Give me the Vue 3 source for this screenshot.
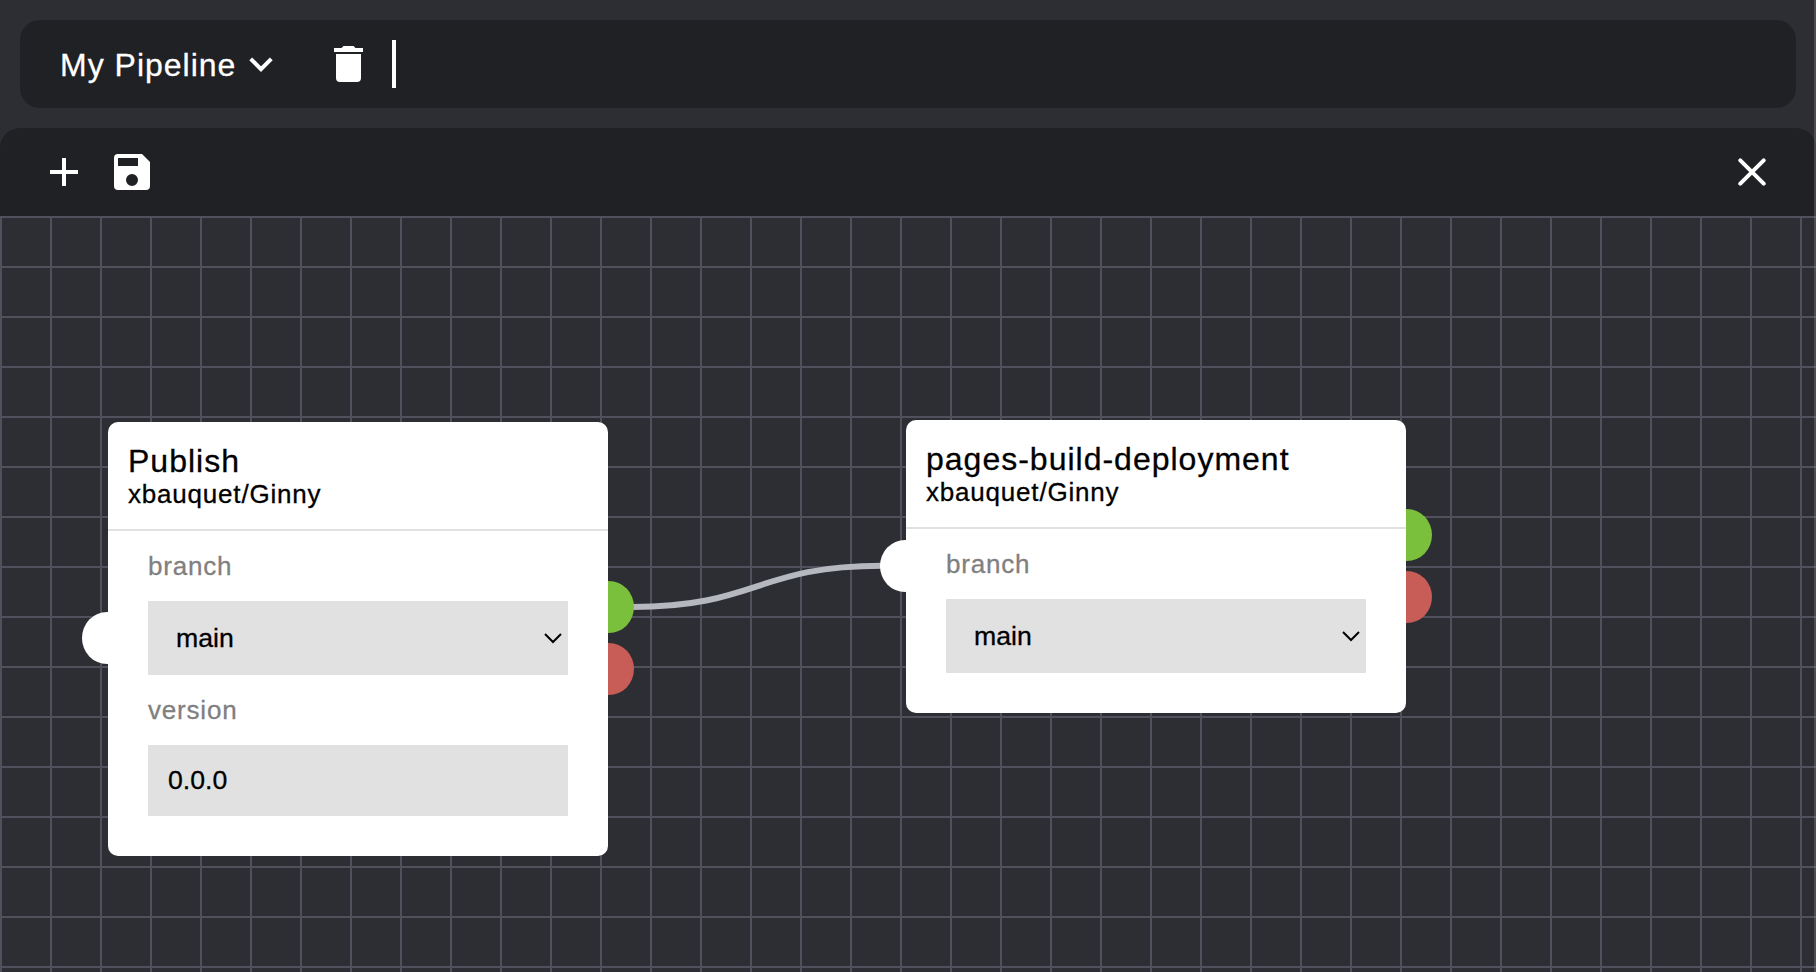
<script setup>
const nodes = [
  {
    id: 'publish', title: 'Publish', repo: 'xbauquet/Ginny',
    fields: [
      { label: 'branch', type: 'select', value: 'main' },
      { label: 'version', type: 'text', value: '0.0.0' },
    ],
  },
  {
    id: 'pages', title: 'pages-build-deployment', repo: 'xbauquet/Ginny',
    fields: [{ label: 'branch', type: 'select', value: 'main' }],
  },
]
</script>

<template>
  <div class="app">
    <header class="topbar">
      <button class="pipeline">
        <span class="name">My Pipeline</span>
        <svg class="chevron" width="24" height="16" viewBox="0 0 24 16"><path d="M1.7 2.9 12 13.1 22.3 2.9" fill="none" stroke="#fff" stroke-width="4" /></svg>
      </button>
      <svg class="trash" width="30" height="36" viewBox="0 0 30 36"><path fill="#fff" d="M0 2h7.5l2-2h10l2 2H29v4H0zM2 8h25v24a4 4 0 0 1-4 4H6a4 4 0 0 1-4-4z" /></svg>
      <span class="divider"></span>
    </header>

    <section class="toolbar">
      <svg width="28" height="28" viewBox="0 0 28 28"><path d="M14 0v28M0 14h28" stroke="#fff" stroke-width="4" /></svg>
      <svg class="save" width="36" height="36" viewBox="0 0 36 36"><path fill="#fff" fill-rule="evenodd" d="M4 0h24l8 8v24a4 4 0 0 1-4 4H4a4 4 0 0 1-4-4V4a4 4 0 0 1 4-4zm0 4v8h20V4zm14 16a6 6 0 1 0 0 12 6 6 0 0 0 0-12z" /></svg>
      <svg class="close" width="28" height="28" viewBox="0 0 28 28"><path d="M2.3 2.3 25.7 25.7M25.7 2.3 2.3 25.7" stroke="#fff" stroke-width="4" stroke-linecap="round" /></svg>
    </section>

    <main class="canvas">
      <svg class="links" width="1816" height="756" viewBox="0 216 1816 756"><path d="M632 607C757 607 757 565.7 882 565.7" fill="none" stroke="#b5b8bf" stroke-width="6" /></svg>
      <article v-for="node in nodes" :key="node.id" class="node" :class="node.id">
        <i class="port input"></i>
        <i class="port success"></i>
        <i class="port failure"></i>
        <div class="card">
          <div class="head">
            <div class="title">{{ node.title }}</div>
            <div class="repo">{{ node.repo }}</div>
          </div>
          <div class="body">
            <div v-for="field in node.fields" :key="field.label" class="field">
              <div class="label">{{ field.label }}</div>
              <div class="control" :class="field.type">
                <span>{{ field.value }}</span>
                <svg v-if="field.type === 'select'" width="18" height="11" viewBox="0 0 18 11"><path d="M1 1 9 9 17 1" fill="none" stroke="#000" stroke-width="2" /></svg>
              </div>
            </div>
          </div>
        </div>
      </article>
    </main>
    <div class="edge"></div>
  </div>
</template>

<style>
body { background: #2d2e33; }
</style>

<style scoped>
.app {
  position: relative;
  box-sizing: border-box;
  width: 1816px;
  height: 972px;
  padding-top: 20px;
  overflow: hidden;
  display: flex;
  flex-direction: column;
  gap: 20px;
  background: #2d2e33;
  font-family: "Liberation Sans", Arial, sans-serif;
  -webkit-text-stroke-width: 0.3px;
}
.topbar {
  box-sizing: border-box;
  flex: none;
  height: 88px;
  margin: 0 20px;
  padding-left: 40px;
  border-radius: 20px;
  background: #202124;
  display: flex;
  align-items: center;
}
.pipeline {
  width: 213px;
  padding: 0;
  border: 0;
  background: none;
  color: #fff;
  font: 32px "Liberation Sans", Arial, sans-serif;
  letter-spacing: 1px;
  display: flex;
  align-items: center;
  justify-content: space-between;
}
.name { padding-top: 2px; white-space: nowrap; }
.trash { margin-left: 61px; }
.divider { width: 4px; height: 48px; margin-left: 28px; background: #fff; }
.toolbar {
  box-sizing: border-box;
  flex: none;
  height: 88px;
  padding: 0 50px;
  border-radius: 20px 20px 0 0;
  background: #202124;
  display: flex;
  align-items: center;
}
.save { margin-left: 36px; }
.close { margin-left: auto; }
.canvas {
  position: relative;
  flex: 1;
  margin-top: -20px;
  background-color: #2d2e33;
  background-image:
    linear-gradient(#51515d 2px, transparent 2px),
    linear-gradient(90deg, #51515d 2px, transparent 2px);
  background-size: 50px 50px;
}
.links { position: absolute; inset: 0; }
.node { position: absolute; width: 500px; }
.publish { left: 108px; top: 206px; }
.pages { left: 906px; top: 204px; }
.card {
  position: relative;
  border-radius: 10px;
  background: #fff;
  color: #000;
}
.head {
  box-sizing: border-box;
  height: 109px;
  padding: 21px 20px 0;
  border-bottom: 2px solid #e1e1e1;
}
.title { font-size: 32px; line-height: 37px; letter-spacing: 1px; }
.repo { margin-top: -1px; font-size: 26px; line-height: 30px; letter-spacing: 0.8px; }
.body { padding: 0 40px 40px; }
.label {
  height: 70px;
  line-height: 71px;
  color: #808080;
  font-size: 26px;
  letter-spacing: 0.8px;
}
.control {
  box-sizing: border-box;
  background: #e1e1e1;
  display: flex;
  align-items: center;
  justify-content: space-between;
  font-size: 26.67px;
}
.select { height: 74px; padding: 0 6px 0 28px; }
.text { height: 71px; padding: 0 20px; }
.port {
  position: absolute;
  width: 50px;
  height: 52px;
  border-radius: 50%;
}
.input { left: -26px; background: #fff; }
.success { right: -26px; background: #7bc03c; }
.failure { right: -26px; background: #c85d57; }
.publish .input { top: 190px; }
.publish .success { top: 159px; }
.publish .failure { top: 221px; }
.pages .input { top: 120px; }
.pages .success { top: 89px; }
.pages .failure { top: 151px; }
.edge {
  position: absolute;
  top: 0;
  right: 0;
  width: 2px;
  height: 100%;
  background: rgba(128, 128, 128, 0.4);
}
</style>
